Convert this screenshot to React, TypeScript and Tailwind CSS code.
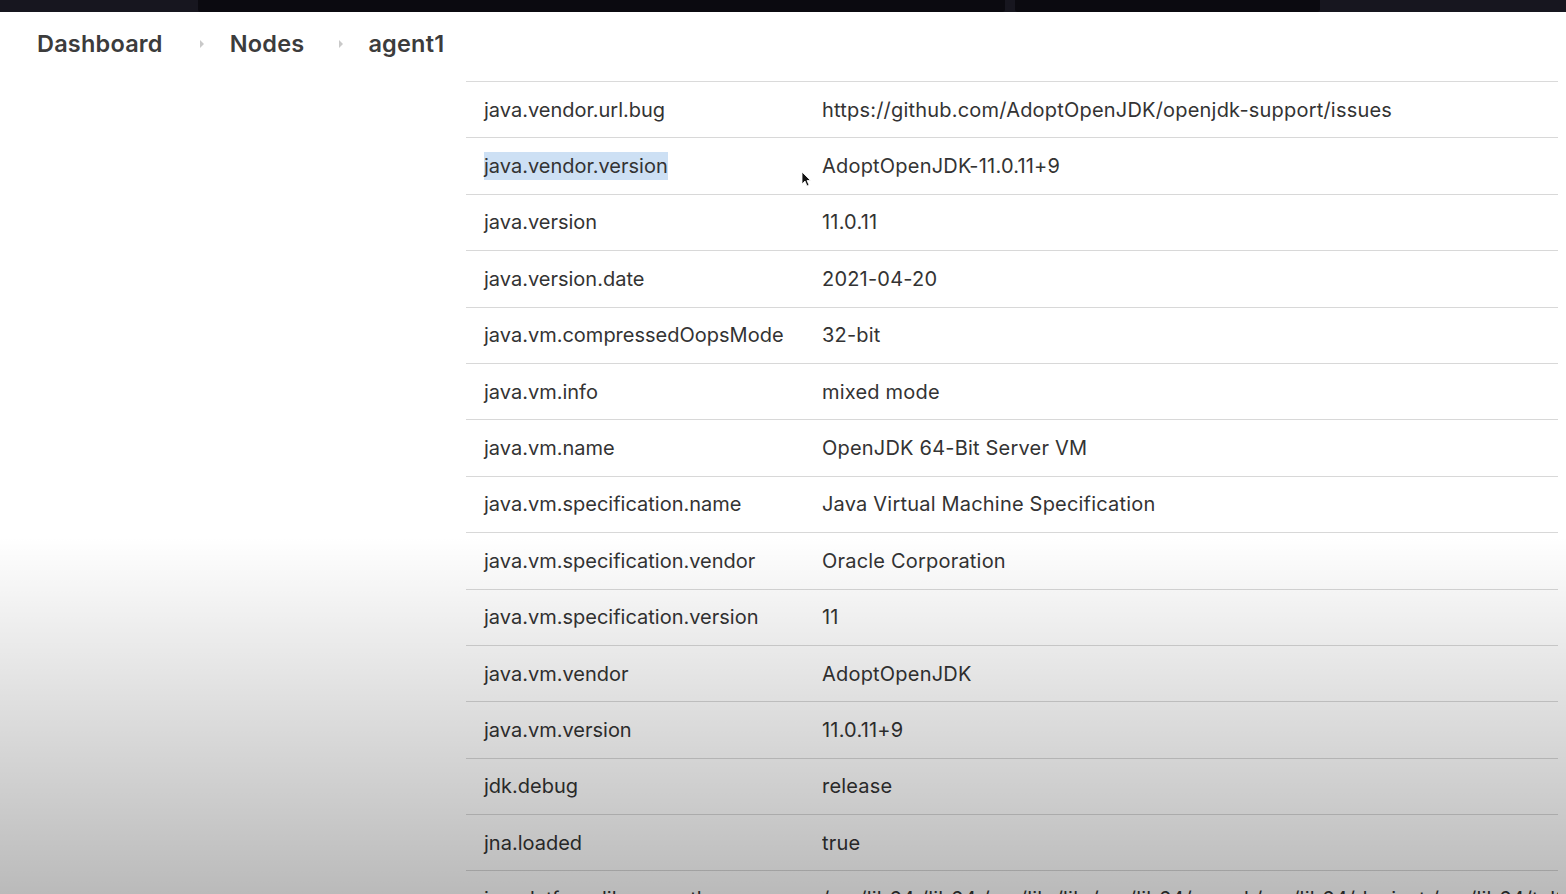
import React from "react";

const rows: [string, string][] = [
  ["java.vendor.url.bug", "https://github.com/AdoptOpenJDK/openjdk-support/issues"],
  ["java.vendor.version", "AdoptOpenJDK-11.0.11+9"],
  ["java.version", "11.0.11"],
  ["java.version.date", "2021-04-20"],
  ["java.vm.compressedOopsMode", "32-bit"],
  ["java.vm.info", "mixed mode"],
  ["java.vm.name", "OpenJDK 64-Bit Server VM"],
  ["java.vm.specification.name", "Java Virtual Machine Specification"],
  ["java.vm.specification.vendor", "Oracle Corporation"],
  ["java.vm.specification.version", "11"],
  ["java.vm.vendor", "AdoptOpenJDK"],
  ["java.vm.version", "11.0.11+9"],
  ["jdk.debug", "release"],
  ["jna.loaded", "true"],
  ["jna.platform.library.path", "/usr/lib64:/lib64:/usr/lib:/lib:/usr/lib64/mysql:/usr/lib64/dyninst:/usr/lib64/tcl8.6"],
];

function Chevron() {
  return (
    <svg width="6" height="10" viewBox="0 0 6 10" className="shrink-0">
      <path d="M1 1 L5 5 L1 9 Z" fill="#c9c9c9" />
    </svg>
  );
}

export default function App() {
  return (
    <div
      className="relative h-[894px] w-[1566px] overflow-hidden bg-white"
      style={{ fontFamily: "Inter, 'Noto Sans', Arial, sans-serif" }}
    >
      {/* browser chrome strip */}
      <div className="flex h-[12px] items-stretch bg-[#17161f]">
        <div className="ml-[198px] w-[807px] rounded-b-[3px] bg-[#0b0a10]" />
        <div className="ml-[10px] w-[305px] rounded-b-[3px] bg-[#0b0a10]" />
      </div>

      {/* breadcrumb */}
      <div className="flex h-[63px] items-center pl-[37px] text-[23.5px] font-semibold text-[#3c3c3c]">
        <span className="tracking-[0.2px]">Dashboard</span>
        <span className="ml-[36px] mr-[25px] flex items-center"><Chevron /></span>
        <span className="tracking-[0.2px]">Nodes</span>
        <span className="ml-[34px] mr-[24px] flex items-center"><Chevron /></span>
        <span className="tracking-[0.2px]">agent1</span>
      </div>

      {/* table */}
      <div className="ml-[466px] mt-[6px] w-[1092px] border-t border-[#dadada] text-[20px] text-[#333333]">
        {rows.map(([k, v], i) => (
          <div
            key={k}
            className="grid h-[56.4px] grid-cols-[356px_1fr] items-center border-b border-[#d8d8d8]"
          >
            <div className="pl-[18px] whitespace-nowrap">
              {i === 1 ? <span className="bg-[#cde0f4] py-[2px]">{k}</span> : k}
            </div>
            <div className="whitespace-nowrap overflow-hidden tracking-[0.2px]">{v}</div>
          </div>
        ))}
      </div>

      {/* mouse cursor */}
      <svg
        className="pointer-events-none absolute left-[801px] top-[171px]"
        width="10"
        height="16"
        viewBox="0 0 10 16"
      >
        <path d="M1 1 L1 13 L4 10 L6 15 L8 14 L6 9.5 L9.5 9.5 Z" fill="#111" stroke="#fff" strokeWidth="0.8" />
      </svg>

      {/* video vignette gradient */}
      <div className="pointer-events-none absolute inset-0 bg-[linear-gradient(to_bottom,rgba(0,0,0,0)_60%,rgba(0,0,0,0.27)_100%)]" />
    </div>
  );
}
